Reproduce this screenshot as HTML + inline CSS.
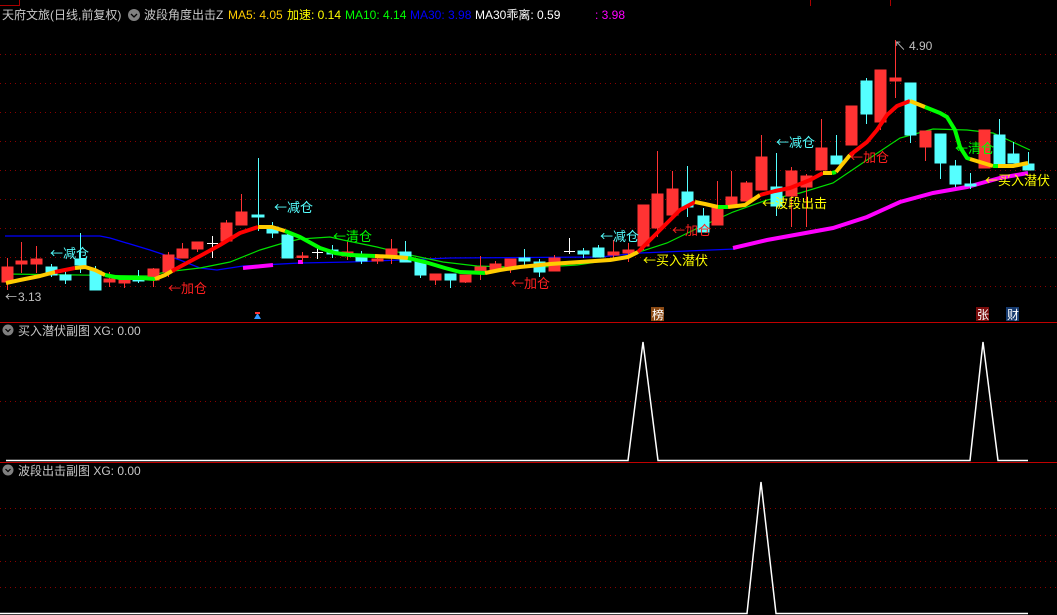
<!DOCTYPE html>
<html><head><meta charset="utf-8"><style>
html,body{margin:0;padding:0;background:#000;width:1057px;height:615px;overflow:hidden}
svg{display:block}
text{font-family:"Liberation Sans","Noto Sans CJK SC",sans-serif}
.lb text{font-family:"Noto Sans CJK SC","WenQuanYi Zen Hei",sans-serif}
</style></head><body>
<svg width="1057" height="615" viewBox="0 0 1057 615" xmlns="http://www.w3.org/2000/svg">
<rect width="1057" height="615" fill="#000"/>
<line x1="0" y1="5.5" x2="19" y2="5.5" stroke="#a00" stroke-width="1"/>
<line x1="19.5" y1="0" x2="19.5" y2="6" stroke="#a00"/>
<line x1="810.5" y1="0" x2="810.5" y2="6" stroke="#a00"/>
<line x1="890.5" y1="0" x2="890.5" y2="6" stroke="#a00"/>
<g stroke="#8a0000" stroke-width="1" stroke-dasharray="1,4">
<line x1="0" y1="54.5" x2="1057" y2="54.5"/><line x1="0" y1="83.5" x2="1057" y2="83.5"/>
<line x1="0" y1="112.5" x2="1057" y2="112.5"/><line x1="0" y1="141.5" x2="1057" y2="141.5"/>
<line x1="0" y1="170.5" x2="1057" y2="170.5"/><line x1="0" y1="199.5" x2="1057" y2="199.5"/>
<line x1="0" y1="228.5" x2="1057" y2="228.5"/><line x1="0" y1="257.5" x2="1057" y2="257.5"/>
<line x1="0" y1="286.5" x2="1057" y2="286.5"/>
<line x1="0" y1="401.5" x2="1057" y2="401.5"/>
<line x1="0" y1="508.5" x2="1057" y2="508.5"/><line x1="0" y1="535.5" x2="1057" y2="535.5"/>
<line x1="0" y1="561.5" x2="1057" y2="561.5"/><line x1="0" y1="587.5" x2="1057" y2="587.5"/>
</g>
<line x1="0" y1="322.5" x2="1057" y2="322.5" stroke="#c00000"/>
<line x1="0" y1="462.5" x2="1057" y2="462.5" stroke="#c00000"/>

<polyline fill="none" stroke="#0000ff" stroke-width="1.3" points="5,236 100,236 110,238 150,250 180,260 200,268 217,270 243,266 300,263 350,262 400,260 450,258 600,257 640,253 735,249"/>
<polyline fill="none" stroke="#ff00ff" stroke-width="4" points="733,248 767,240 833,228 867,217 900,202 933,193 967,187 1000,178 1028,173"/>
<polyline fill="none" stroke="#ff00ff" stroke-width="4" points="243,268 273,265"/>
<rect x="298" y="260" width="5" height="4" fill="#ff00ff"/>
<polyline fill="none" stroke="#00e000" stroke-width="1.2" points="6,274 150,276 165,272 200,268 230,262 260,250 280,244 300,239 330,237 343,240 377,247 410,255 443,262 477,266 510,267 543,267 577,265 610,260 633,254 667,243 700,227 733,212 767,200 800,193 833,183 867,160 900,138 933,129 967,130 993,133 1030,150"/>

<g stroke-width="1">
<g fill="#ff3333" stroke="#ff3333">
<line x1="7.5" y1="258" x2="7.5" y2="290"/><rect x="2" y="267" width="11" height="15"/>
<line x1="21.5" y1="242" x2="21.5" y2="273"/><rect x="16" y="261" width="11" height="3"/>
<line x1="36.5" y1="246" x2="36.5" y2="273"/><rect x="31" y="259" width="11" height="5"/>
<line x1="109.5" y1="272" x2="109.5" y2="287"/><rect x="104" y="279" width="11" height="3"/>
<line x1="124.5" y1="276" x2="124.5" y2="288"/><rect x="119" y="279" width="11" height="4"/>
<line x1="153.5" y1="268" x2="153.5" y2="287"/><rect x="148" y="269" width="11" height="11"/>
<line x1="168.5" y1="252" x2="168.5" y2="277"/><rect x="163" y="255" width="11" height="17"/>
<line x1="182.5" y1="243" x2="182.5" y2="258"/><rect x="177" y="249" width="11" height="9"/>
<line x1="197.5" y1="242" x2="197.5" y2="252"/><rect x="192" y="242" width="11" height="7"/>
<line x1="226.5" y1="220" x2="226.5" y2="243"/><rect x="221" y="223" width="11" height="18"/>
<line x1="241.5" y1="194" x2="241.5" y2="225"/><rect x="236" y="212" width="11" height="13"/>
<line x1="302.5" y1="252" x2="302.5" y2="262"/><rect x="297" y="256" width="11" height="1.5"/>
<line x1="347.5" y1="242" x2="347.5" y2="260"/><rect x="342" y="252" width="11" height="4"/>
<line x1="377.5" y1="257" x2="377.5" y2="264"/><rect x="372" y="259" width="11" height="2"/>
<line x1="391.5" y1="239" x2="391.5" y2="264"/><rect x="386" y="249" width="11" height="9"/>
<line x1="435.5" y1="274" x2="435.5" y2="285"/><rect x="430" y="274" width="11" height="6"/>
<line x1="465.5" y1="275" x2="465.5" y2="283"/><rect x="460" y="275" width="11" height="7"/>
<line x1="480.5" y1="256" x2="480.5" y2="280"/><rect x="475" y="267" width="11" height="6"/>
<line x1="495.5" y1="261" x2="495.5" y2="271"/><rect x="490" y="264" width="11" height="7"/>
<line x1="510.5" y1="259" x2="510.5" y2="273"/><rect x="505" y="259" width="11" height="8"/>
<line x1="554.5" y1="255" x2="554.5" y2="271"/><rect x="549" y="258" width="11" height="13"/>
<line x1="613.5" y1="240" x2="613.5" y2="261"/><rect x="608" y="252" width="11" height="3"/>
<line x1="628.5" y1="243" x2="628.5" y2="262"/><rect x="623" y="250" width="11" height="3"/>
<line x1="643.5" y1="205" x2="643.5" y2="250"/><rect x="638" y="205" width="11" height="41"/>
<line x1="657.5" y1="151" x2="657.5" y2="237"/><rect x="652" y="194" width="11" height="34"/>
<line x1="672.5" y1="171" x2="672.5" y2="215"/><rect x="667" y="189" width="11" height="26"/>
<line x1="717.5" y1="181" x2="717.5" y2="225"/><rect x="712" y="207" width="11" height="18"/>
<line x1="731.5" y1="171" x2="731.5" y2="207"/><rect x="726" y="197" width="11" height="10"/>
<line x1="746.5" y1="181" x2="746.5" y2="201"/><rect x="741" y="183" width="11" height="18"/>
<line x1="761.5" y1="135" x2="761.5" y2="190"/><rect x="756" y="157" width="11" height="33"/>
<line x1="791.5" y1="167" x2="791.5" y2="227"/><rect x="786" y="171" width="11" height="25"/>
<line x1="806.5" y1="174" x2="806.5" y2="227"/><rect x="801" y="176" width="11" height="11"/>
<line x1="821.5" y1="119" x2="821.5" y2="170"/><rect x="816" y="148" width="11" height="22"/>
<line x1="851.5" y1="106" x2="851.5" y2="145"/><rect x="846" y="106" width="11" height="39"/>
<line x1="880.5" y1="70" x2="880.5" y2="130"/><rect x="875" y="70" width="11" height="52"/>
<line x1="895.5" y1="40" x2="895.5" y2="98"/><rect x="890" y="78" width="11" height="3"/>
<line x1="925.5" y1="131" x2="925.5" y2="161"/><rect x="920" y="131" width="11" height="16"/>
<line x1="984.5" y1="130" x2="984.5" y2="168"/><rect x="979" y="130" width="11" height="38"/>
</g>
<g fill="#55ffff" stroke="#55ffff">
<line x1="51.5" y1="264" x2="51.5" y2="277"/><rect x="46" y="267" width="11" height="8"/>
<line x1="65.5" y1="270" x2="65.5" y2="284"/><rect x="60" y="275" width="11" height="5"/>
<line x1="80.5" y1="233" x2="80.5" y2="273"/><rect x="75" y="259" width="11" height="6"/>
<line x1="95.5" y1="266" x2="95.5" y2="290"/><rect x="90" y="271" width="11" height="19"/>
<line x1="138.5" y1="270" x2="138.5" y2="283"/><rect x="133" y="277" width="11" height="4"/>
<line x1="258.5" y1="158" x2="258.5" y2="231"/><rect x="252" y="215" width="12" height="2"/>
<line x1="272.5" y1="222" x2="272.5" y2="238"/><rect x="267" y="227" width="11" height="6"/>
<line x1="287.5" y1="233" x2="287.5" y2="258"/><rect x="282" y="235" width="11" height="23"/>
<line x1="332.5" y1="245" x2="332.5" y2="258"/><rect x="327" y="250" width="11" height="4"/>
<line x1="361.5" y1="251" x2="361.5" y2="264"/><rect x="356" y="257" width="11" height="4"/>
<line x1="405.5" y1="241" x2="405.5" y2="262"/><rect x="400" y="252" width="11" height="10"/>
<line x1="420.5" y1="262" x2="420.5" y2="278"/><rect x="415" y="262" width="11" height="13"/>
<line x1="450.5" y1="274" x2="450.5" y2="288"/><rect x="445" y="274" width="11" height="6"/>
<line x1="524.5" y1="249" x2="524.5" y2="266"/><rect x="519" y="258" width="11" height="3"/>
<line x1="539.5" y1="259" x2="539.5" y2="277"/><rect x="534" y="262" width="11" height="10"/>
<line x1="583.5" y1="248" x2="583.5" y2="258"/><rect x="578" y="251" width="11" height="3"/>
<line x1="598.5" y1="245" x2="598.5" y2="257"/><rect x="593" y="248" width="11" height="9"/>
<line x1="687.5" y1="166" x2="687.5" y2="217"/><rect x="682" y="192" width="11" height="15"/>
<line x1="703.5" y1="208" x2="703.5" y2="232"/><rect x="698" y="216" width="11" height="16"/>
<line x1="776.5" y1="153" x2="776.5" y2="216"/><rect x="771" y="187" width="11" height="19"/>
<line x1="836.5" y1="135" x2="836.5" y2="164"/><rect x="831" y="156" width="11" height="8"/>
<line x1="866.5" y1="78" x2="866.5" y2="124"/><rect x="861" y="81" width="11" height="33"/>
<line x1="910.5" y1="83" x2="910.5" y2="143"/><rect x="905" y="83" width="11" height="52"/>
<line x1="940.5" y1="134" x2="940.5" y2="179"/><rect x="935" y="134" width="11" height="29"/>
<line x1="955.5" y1="160" x2="955.5" y2="187"/><rect x="950" y="166" width="11" height="18"/>
<line x1="970.5" y1="173" x2="970.5" y2="189"/><rect x="965" y="184" width="11" height="2"/>
<line x1="999.5" y1="119" x2="999.5" y2="166"/><rect x="994" y="135" width="11" height="31"/>
<line x1="1013.5" y1="142" x2="1013.5" y2="163"/><rect x="1008" y="154" width="11" height="9"/>
<line x1="1028.5" y1="152" x2="1028.5" y2="170"/><rect x="1023" y="164" width="11" height="6"/>
</g>
<g stroke="#ffffff">
<line x1="212.5" y1="236" x2="212.5" y2="258"/><line x1="207" y1="243.5" x2="218" y2="243.5"/>
<line x1="317.5" y1="245" x2="317.5" y2="259"/><line x1="312" y1="252.5" x2="323" y2="252.5"/>
<line x1="569.5" y1="238" x2="569.5" y2="254"/><line x1="564" y1="251.5" x2="575" y2="251.5"/>
</g>
</g>

<g fill="none" stroke-width="4" stroke-linejoin="round">
<polyline stroke="#ffcc00" points="6,283 20,280 40,276 55,272"/>
<polyline stroke="#ff0000" points="55,272 65,270 75,268"/>
<polyline stroke="#ffcc00" points="75,268 85,267 95,270 105,275"/>
<polyline stroke="#00ff00" points="105,275 120,278 140,278 155,279"/>
<polyline stroke="#ffcc00" points="155,279 165,275 172,271"/>
<polyline stroke="#ff0000" points="172,271 185,264 200,256 220,245 240,233 258,227"/>
<polyline stroke="#ffcc00" points="258,227 272,227 285,231"/>
<polyline stroke="#00ff00" points="285,231 300,237 320,248 335,253 350,255 375,256"/>
<polyline stroke="#ffcc00" points="375,256 395,257 408,258"/>
<polyline stroke="#00ff00" points="408,258 425,262 445,268 460,272 485,273"/>
<polyline stroke="#ffcc00" points="485,273 500,270 520,267 550,264 580,262 610,260 628,257 638,252"/>
<polyline stroke="#ff0000" points="638,252 650,240 665,225 680,210 695,202"/>
<polyline stroke="#ffcc00" points="695,202 705,204 718,207"/>
<polyline stroke="#00ff00" points="718,207 728,207"/>
<polyline stroke="#ffcc00" points="728,207 745,205 760,195"/>
<polyline stroke="#ff0000" points="760,195 775,191 790,188 810,180 823,173"/>
<polyline stroke="#ffcc00" points="823,173 832,173"/>
<polyline stroke="#00ff00" points="832,173 836,172"/>
<polyline stroke="#ffcc00" points="836,172 850,155"/>
<polyline stroke="#ff0000" points="850,155 867,142 877,130 887,115 897,106 910,101"/>
<polyline stroke="#ffcc00" points="910,101 925,107"/>
<polyline stroke="#00ff00" points="925,107 940,113 947,117 955,130 960,147 967,158 970,159"/>
<polyline stroke="#ffcc00" points="970,159 993,166"/>
<polyline stroke="#00ff00" points="993,166 998,166"/>
<polyline stroke="#ffcc00" points="998,166 1013,166 1028,163"/>
</g>

<g font-size="13" class="lb">
<text x="50" y="258" fill="#55ffff">←减仓</text>
<text x="274" y="212" fill="#55ffff">←减仓</text>
<text x="168" y="293" fill="#ff2020">←加仓</text>
<text x="333" y="241" fill="#00ff00">←清仓</text>
<text x="511" y="288" fill="#ff2020">←加仓</text>
<text x="600" y="241" fill="#55ffff">←减仓</text>
<text x="643" y="265" fill="#ffff00">←买入潜伏</text>
<text x="672" y="235" fill="#ff2020">←加仓</text>
<text x="762" y="208" fill="#ffff00">←波段出击</text>
<text x="776" y="147" fill="#55ffff">←减仓</text>
<text x="850" y="162" fill="#ff2020">←加仓</text>
<text x="955" y="153" fill="#00ff00">←清仓</text>
<text x="985" y="185" fill="#ffff00">←买入潜伏</text>
</g>
<g class="lb" font-size="12" fill="#c0c0c0">
<text x="5" y="301">←</text>
<text x="894" y="50">↖</text>
</g>
<text x="18" y="301" font-size="12" fill="#c0c0c0">3.13</text>
<text x="909" y="50" font-size="12" fill="#c0c0c0">4.90</text>

<path d="M254 319 L257.5 313 L261 319 Z" fill="#3399ff"/>
<rect x="255" y="312" width="5" height="2" fill="#ff3333"/>
<rect x="651" y="307" width="13" height="14" fill="#8b4a14"/>
<text x="652" y="319" font-size="12" fill="#fff">榜</text>
<rect x="976" y="307" width="13" height="14" fill="#7a0c0c"/>
<text x="977" y="319" font-size="12" fill="#fff">张</text>
<rect x="1006" y="307" width="13" height="14" fill="#163a6e"/>
<text x="1007" y="319" font-size="12" fill="#fff">财</text>

<g font-size="12">
<text x="2" y="19" fill="#c8c8c8">天府文旅(日线,前复权)</text>
<circle cx="134" cy="15" r="6" fill="#808080"/>
<path d="M131 14 L134 17 L137 14" stroke="#000" stroke-width="1.3" fill="none"/>
<text x="144" y="19" fill="#c8c8c8">波段角度出击Z</text>
<text x="228" y="19" fill="#ffcc00">MA5: 4.05</text>
<text x="287" y="19" fill="#ffff00">加速: 0.14</text>
<text x="345" y="19" fill="#00ff00">MA10: 4.14</text>
<text x="410" y="19" fill="#0000ff">MA30: 3.98</text>
<text x="475" y="19" fill="#ffffff">MA30乖离: 0.59</text>
<text x="595" y="19" fill="#ff00ff">: 3.98</text>
</g>

<circle cx="8" cy="330" r="5.5" fill="#808080"/>
<path d="M5.5 329 L8 331.5 L10.5 329" stroke="#000" stroke-width="1.2" fill="none"/>
<text x="18" y="335" font-size="12" fill="#c8c8c8">买入潜伏副图 XG: 0.00</text>
<polyline fill="none" stroke="#fff" stroke-width="1.5" points="6,460.5 628,460.5 643,342 658,460.5 970,460.5 983,342 998,460.5 1028,460.5"/>

<circle cx="8" cy="470" r="5.5" fill="#808080"/>
<path d="M5.5 469 L8 471.5 L10.5 469" stroke="#000" stroke-width="1.2" fill="none"/>
<text x="18" y="475" font-size="12" fill="#c8c8c8">波段出击副图 XG: 0.00</text>
<polyline fill="none" stroke="#fff" stroke-width="1.5" points="0,613.5 747,613.5 761,482 776,613.5 1028,613.5"/>
</svg>
</body></html>
